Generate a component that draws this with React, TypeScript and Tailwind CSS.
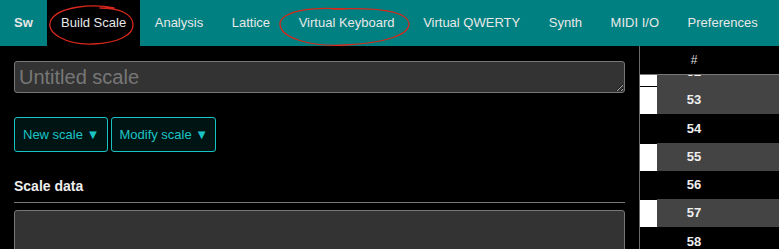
import React from 'react'

const tabs = ['Build Scale', 'Analysis', 'Lattice', 'Virtual Keyboard', 'Virtual QWERTY', 'Synth', 'MIDI I/O', 'Preferences']

const rows = [
  { n: 52, white: true },
  { n: 53, white: true },
  { n: 54, white: false },
  { n: 55, white: true },
  { n: 56, white: false },
  { n: 57, white: true },
  { n: 58, white: false },
  { n: 59, white: true },
]

function Annotations() {
  return (
    <svg className="absolute left-0 top-0 pointer-events-none" width="779" height="50" viewBox="0 0 779 50" fill="none">
      <path
        d="M 114 8 C 92 3, 58 7, 51 20 C 45 33, 66 45, 93 44 C 118 43, 134 35, 133 24 C 132 14, 120 8, 100 8"
        stroke="#d8281c"
        strokeWidth="1.3"
        strokeLinecap="round"
      />
      <path
        d="M 345 9 C 305 6, 282 13, 280 23 C 279 37, 308 47, 345 45 C 385 43, 410 35, 409 23 C 407 12, 382 7, 332 9"
        stroke="#d8281c"
        strokeWidth="1.3"
        strokeLinecap="round"
      />
    </svg>
  )
}

export default function App() {
  return (
    <div className="relative w-[779px] h-[249px] overflow-hidden bg-black font-['Liberation_Sans',Arial,sans-serif]">
      {/* Nav */}
      <div className="flex h-[46px] bg-[#008080] text-[13px] text-[#e8e8e8]">
        <div className="flex items-center px-[14px] font-bold">Sw</div>
        {tabs.map(t => (
          <div
            key={t}
            className={'flex items-center px-[14.3px] whitespace-nowrap ' + (t === 'Build Scale' ? 'bg-black' : '')}
          >
            {t}
          </div>
        ))}
      </div>
      <Annotations />

      <div className="flex h-[203px]">
        {/* Left: scale editor */}
        <div className="w-[639px] shrink-0 pl-[14px] pr-[14px]">
          <textarea
            placeholder="Untitled scale"
            className="mt-[15px] block w-[611px] h-[32px] resize-y rounded-[3px] border border-[#777] bg-[#333] px-[4px] py-0 text-[20px] leading-[30px] text-[#ddd] placeholder:text-[#777] outline-none"
          />
          <div className="mt-[24px] flex gap-[3px]">
            <button className="h-[35px] rounded-[3px] border border-[#19c3c3] bg-[#001414] px-[8px] text-[13px] text-[#1bc4c4]">
              New scale ▼
            </button>
            <button className="h-[35px] rounded-[3px] border border-[#19c3c3] bg-[#001414] px-[7px] text-[13px] text-[#1bc4c4]">
              Modify scale ▼
            </button>
          </div>
          <h3 className="mt-[26px] text-[14px] font-bold leading-[16px] text-[#eee]">Scale data</h3>
          <div className="mt-[8px] h-px w-[611px] bg-[#777]" />
          <div className="mt-[7px] h-[60px] w-[611px] rounded-[3px] border border-[#777] bg-[#333]" />
        </div>

        {/* Right: note table */}
        <div className="flex flex-1 flex-col border-l border-[#6a6a6a] overflow-hidden">
          <div className="flex h-[29px] shrink-0 border-b border-[#777] text-[12px] text-[#ddd]">
            <div className="w-[17px]" />
            <div className="flex w-[74px] items-center justify-center">#</div>
          </div>
          <div className="flex-1 overflow-hidden">
            <div className="-mt-[17.25px]">
              {rows.map(r => (
                <div key={r.n} className={'flex h-[28.25px] ' + (r.white ? 'bg-[#444]' : 'bg-black')}>
                  <div className={'w-[17px] ' + (r.white ? 'bg-white border-t border-black' : '')} />
                  <div className="flex w-[74px] items-center justify-center text-[13px] font-bold text-[#eee]">
                    {r.n}
                  </div>
                </div>
              ))}
            </div>
          </div>
        </div>
      </div>
    </div>
  )
}
